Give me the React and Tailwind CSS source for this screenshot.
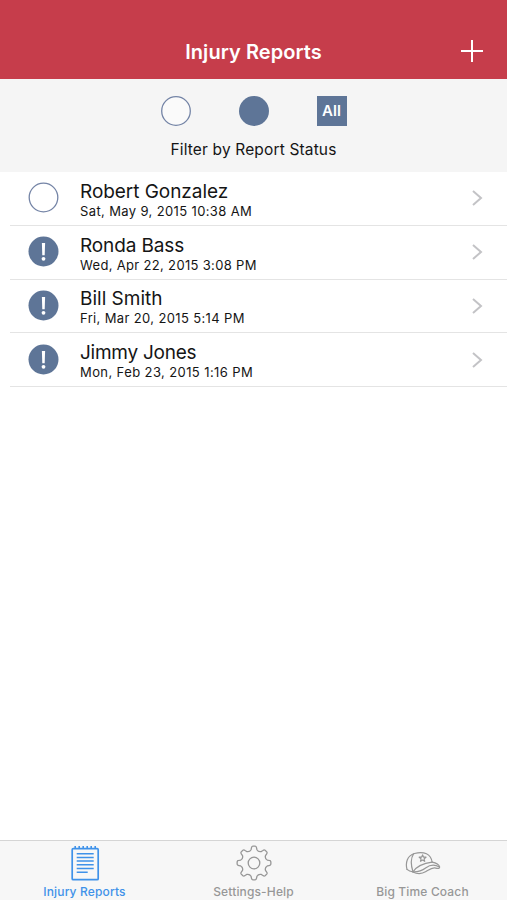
const reports = [
  { name: 'Robert Gonzalez', date: 'Sat, May 9, 2015 10:38 AM', open: false, nameSpacing: 'tracking-[-0.05px]', dateSpacing: 'tracking-[0.37px]' },
  { name: 'Ronda Bass', date: 'Wed, Apr 22, 2015 3:08 PM', open: true, nameSpacing: 'tracking-[-0.12px]', dateSpacing: 'tracking-[0.33px]' },
  { name: 'Bill Smith', date: 'Fri, Mar 20, 2015 5:14 PM', open: true, nameSpacing: 'tracking-[0px]', dateSpacing: 'tracking-[0.36px]' },
  { name: 'Jimmy Jones', date: 'Mon, Feb 23, 2015 1:16 PM', open: true, nameSpacing: 'tracking-[-0.25px]', dateSpacing: 'tracking-[0.4px]' },
]

function StatusIcon({ open }) {
  return (
    <svg className="ml-7 h-8 w-8 shrink-0" viewBox="0 0 32 32">
      {open ? (
        <>
          <circle cx="15.5" cy="15.5" r="15" fill="#5e7597" />
          <path d="M13.9 7h3.2l-.4 12.2h-2.4z" fill="#fff" />
          <circle cx="15.5" cy="22.8" r="1.9" fill="#fff" />
        </>
      ) : (
        <circle cx="15.5" cy="15.5" r="14.3" fill="none" stroke="#7484a6" strokeWidth="1.3" />
      )}
    </svg>
  )
}

function NotepadIcon() {
  return (
    <svg className="h-9 w-9" viewBox="0 0 36 36" fill="none" stroke="currentColor">
      <rect x="5.2" y="3.7" width="26" height="31" rx="1" strokeWidth="1.7" />
      <path d="M8.2 1v3M12.2 1v3M16.2 1v3M20.2 1v3M24.2 1v3M28.2 1v3" strokeWidth="1.6" />
      <path d="M9.7 8.7h17M9.7 12.4h17M9.7 16.1h17M9.7 19.8h17M9.7 23.5h17M9.7 27.2h11" strokeWidth="1.5" />
    </svg>
  )
}

// eight rounded teeth, one every 45 degrees
function gearPath() {
  const at = (r, deg) => {
    const a = ((deg - 90) * Math.PI) / 180
    return `${(18 + r * Math.cos(a)).toFixed(2)} ${(18 + r * Math.sin(a)).toFixed(2)}`
  }
  let d = `M${at(13.6, -12.5)}`
  for (let i = 0; i < 8; i++) {
    const c = i * 45
    d += `L${at(15.4, c - 9.5)}Q${at(16.9, c - 8)} ${at(16.9, c - 4)}L${at(16.9, c + 4)}Q${at(16.9, c + 8)} ${at(15.4, c + 9.5)}L${at(13.6, c + 12.5)}Q${at(11.6, c + 22.5)} ${at(13.6, c + 32.5)}`
  }
  return d + 'Z'
}

function GearIcon() {
  return (
    <svg className="h-9 w-9" viewBox="0 0 36 36" fill="none" stroke="currentColor" strokeWidth="1.3" strokeLinejoin="round">
      <path d={gearPath()} />
      <circle cx="18" cy="18" r="5.8" />
    </svg>
  )
}

function CapIcon() {
  return (
    <svg className="h-9 w-9" viewBox="0 0 36 36" fill="none" stroke="currentColor" strokeWidth="1.2" strokeLinecap="round" strokeLinejoin="round">
      <path d="M2 24.4C.2 17.5 2.2 10.6 9.5 8.5c9.500-2.700 16.500.600 17.600 8.700" />
      <path d="M8.600 8.800C5.600 13.500 5.800 20 8 26.900" />
      <path d="M2 24.400c1.600 1.500 3.800 2.300 6 2.500C11.500 21.600 18 18.300 27.100 17.200" />
      <path d="M27.100 17.200c4 .700 7 2.700 7.500 4.800.3 1.500-1.600 1.800-3.800 1.100-3.600-1.100-6.800 1.700-9.800 3.500-4.100 2.400-8.800 2.700-13 .300" />
      <path d="M8 26.900c5.500.300 9.300-1.500 13-4.200 3.600-2.600 8.600-3.400 13.500-.700" />
      <path d="m17.600 9.900.9 2.200 2.500.1-1.900 1.700.6 2.400-2.100-1.300-2.100 1.300.6-2.400-1.900-1.700 2.500-.1z" />
    </svg>
  )
}

const tabs = [
  { label: 'Injury Reports', icon: <NotepadIcon />, color: 'text-[#3f92e9]' },
  { label: 'Settings-Help', icon: <GearIcon />, color: 'text-[#979797]' },
  { label: 'Big Time Coach', icon: <CapIcon />, color: 'text-[#979797]' },
]

export default function App() {
  return (
    <div className="flex h-[900px] w-[507px] flex-col overflow-hidden bg-white font-[Inter,sans-serif] text-[#151515]">
      <header className="relative h-[79px] shrink-0 bg-[#c63d4b] pt-[38px] text-center text-white">
        <h1 className="text-[20px] leading-7 font-semibold tracking-[0.05px]">Injury Reports</h1>
        <button className="absolute top-10 right-6" aria-label="Add report">
          <svg className="h-[22px] w-[22px]" viewBox="0 0 22 22" stroke="currentColor" strokeWidth="2">
            <path d="M0 11h22M11 0v22" />
          </svg>
        </button>
      </header>

      <section className="h-[93px] shrink-0 bg-[#f5f5f5] pt-[17px]">
        <div className="flex items-center justify-center gap-12">
          <svg className="h-[30px] w-[30px]" viewBox="0 0 30 30">
            <circle cx="15" cy="15" r="14.3" fill="#fafafa" stroke="#7484a6" strokeWidth="1.3" />
          </svg>
          <div className="h-[30px] w-[30px] rounded-full bg-[#5e7597]" />
          <div className="flex h-[30px] w-[30px] items-center justify-center bg-[#5e7597] text-[15px] font-semibold text-white">All</div>
        </div>
        <p className="mt-[14px] text-center text-[15.5px] leading-5 tracking-[0.15px]">Filter by Report Status</p>
      </section>

      <main className="flex-1">
        {reports.map((report) => (
          <div key={report.name} className="ml-[10px] h-[53.8px] border-b border-[#e4e4e4]">
            <div className="-ml-[10px] flex h-full items-center">
              <StatusIcon open={report.open} />
              <div className="ml-5 flex-1 pt-1">
                <p className={`text-[19px] leading-[22px] ${report.nameSpacing}`}>{report.name}</p>
                <p className={`text-[13px] leading-[17px] ${report.dateSpacing}`}>{report.date}</p>
              </div>
              <svg className="mr-6 h-4 w-[11px]" viewBox="0 0 11 16" fill="none" stroke="#c3c3c6" strokeWidth="2">
                <path d="m1 1 8 7-8 7" />
              </svg>
            </div>
          </div>
        ))}
      </main>

      <nav className="flex h-[60px] shrink-0 border-t border-[#d5d5d5] bg-[#f7f7f7] pt-1">
        {tabs.map((tab) => (
          <div key={tab.label} className={`flex flex-1 flex-col items-center ${tab.color}`}>
            {tab.icon}
            <span className="mt-[3px] text-[12px] leading-4 font-medium tracking-[0.15px]">{tab.label}</span>
          </div>
        ))}
      </nav>
    </div>
  )
}
